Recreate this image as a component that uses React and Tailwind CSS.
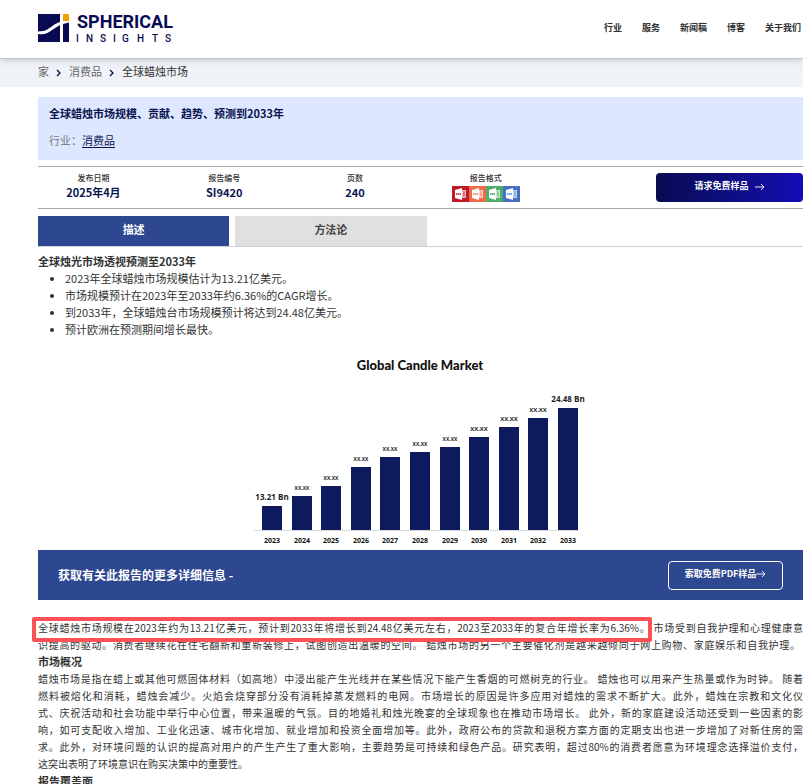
import React, { useState } from "react";

const navLinks = ["行业", "服务", "新闻稿", "博客", "关于我们"];

const facts = [
  { label: "发布日期", value: "2025年4月" },
  { label: "报告编号", value: "SI9420" },
  { label: "页数", value: "240" },
];

const highlights = [
  "2023年全球蜡烛市场规模估计为13.21亿美元。",
  "市场规模预计在2023年至2033年约6.36%的CAGR增长。",
  "到2033年，全球蜡烛台市场规模预计将达到24.48亿美元。",
  "预计欧洲在预测期间增长最快。",
];

// size is the font size of the label above the bar
const bars = [
  { year: 2023, height: 24, label: "13.21 Bn", size: 8 },
  { year: 2024, height: 34, label: "XX.XX", size: 5 },
  { year: 2025, height: 44, label: "XX.XX", size: 5 },
  { year: 2026, height: 63, label: "XX.XX", size: 5 },
  { year: 2027, height: 73, label: "XX.XX", size: 5 },
  { year: 2028, height: 78, label: "XX.XX", size: 5 },
  { year: 2029, height: 83, label: "XX.XX", size: 5 },
  { year: 2030, height: 93, label: "XX.XX", size: 6 },
  { year: 2031, height: 103, label: "XX.XX", size: 6 },
  { year: 2032, height: 112, label: "XX.XX", size: 6 },
  { year: 2033, height: 122, label: "24.48 Bn", size: 8 },
];

const overview = [
  "蜡烛市场是指在蜡上或其他可燃固体材料（如高地）中浸出能产生光线并在某些情况下能产生香烟的可燃树克的行业。 蜡烛也可以用来产生热量或作为时钟。 随着",
  "燃料被熔化和消耗，蜡烛会减少。火焰会烧穿部分没有消耗掉蒸发燃料的电网。市场增长的原因是许多应用对蜡烛的需求不断扩大。此外，蜡烛在宗教和文化仪",
  "式、庆祝活动和社会功能中举行中心位置，带来温暖的气氛。目的地婚礼和烛光晚宴的全球现象也在推动市场增长。 此外，新的家庭建设活动还受到一些因素的影",
  "响，如可支配收入增加、工业化迅速、城市化增加、就业增加和投资全面增加等。此外，政府公布的贷款和退税方案方面的定期支出也进一步增加了对新住房的需",
  "求。此外，对环境问题的认识的提高对用户的产生产生了重大影响，主要趋势是可持续和绿色产品。研究表明，超过80%的消费者愿意为环境理念选择溢价支付，",
];

function Logo() {
  return (
    <a href="#" aria-label="Spherical Insights">
      <svg width="142" height="34" viewBox="0 0 142 34" className="block font-['Roboto',sans-serif]">
        <path d="M0 2H22V10C15 12 11 18 5 19L0 19.500Z" fill="#080b52" />
        <path d="M0 22C7 23 10 21 14 18L22 13V30H0Z" fill="#080b52" />
        <path d="M25 12L31 10.500V30H25Z" fill="#080b52" />
        <rect x="25" y="2" width="6" height="7" fill="#eea303" />
        <text x="39" y="16" fill="#080b52" className="font-bold text-[18px]">
          SPHERICAL
        </text>
        <text
          x="38 48 62 75 84 99 114 127"
          y="30"
          fill="#080b52"
          className="font-medium text-[10px]"
        >
          INSIGHTS
        </text>
      </svg>
    </a>
  );
}

function Chevron() {
  return (
    <svg width="6" height="8" viewBox="0 0 6 8" className="mt-1">
      <path d="M1 1L4 4L1 7" fill="none" stroke="#080b52" strokeWidth="1.3" />
    </svg>
  );
}

function Arrow({ className }) {
  return (
    <svg width="10" height="8" viewBox="0 0 10 8" className={className}>
      <path d="M0 4H9M6 1L9 4L6 7" fill="none" stroke="white" strokeWidth="0.9" />
    </svg>
  );
}

function FormatIcon({ name, back, ink }) {
  return (
    <svg width="17" height="16" viewBox="0 0 17 16" role="img" aria-label={name}>
      <rect width="17" height="16" fill={back} />
      <path d="M9 4H14V12H9Z" fill="white" fillOpacity="0.7" />
      <path d="M11 6H13M11 8H13M11 10H13" stroke={ink} strokeWidth="0.8" />
      <path d="M3 4L10 2V14L3 12Z" fill="white" />
      <path d="M4 8H9" stroke={ink} strokeWidth="1.500" strokeDasharray="1.500 0.400" />
    </svg>
  );
}

function CandleChart() {
  return (
    <svg width="374" height="200" viewBox="0 0 374 200" className="font-['Open_Sans',sans-serif] font-bold">
      <text x="186" y="20" textAnchor="middle" fill="#111" className="font-['Lato',sans-serif] text-[13px] font-black">
        Global Candle Market
      </text>
      <path d="M20 180.500H345" stroke="#d9d9d9" />
      {bars.map((bar, i) => {
        const center = 38 + Math.round(i * 29.6);
        return (
          <g key={bar.year}>
            <rect x={center - 10} y={180 - bar.height} width="20" height={bar.height} fill="#0d1b5e" />
            <text
              x={center}
              y={174 - bar.height}
              textAnchor="middle"
              fill="#222"
              style={{ fontSize: bar.size }}
            >
              {bar.label}
            </text>
            <text x={center} y="193" textAnchor="middle" fill="#111" className="text-[7px]">
              {bar.year}
            </text>
          </g>
        );
      })}
    </svg>
  );
}

function App() {
  const [tab, setTab] = useState("描述");

  return (
    <div className="h-screen overflow-hidden bg-white font-['Noto_Sans_CJK_SC',sans-serif] text-[11px] leading-[17px] text-[#333]">
      <header className="relative flex h-[59px] items-center justify-between border-b border-[#c4c5c9] bg-white pb-1 pl-[38px] pr-[2px] shadow-md">
        <div className="pt-1">
          <Logo />
        </div>
        <nav className="flex gap-5 text-[9px] font-bold">
          {navLinks.map((link) => (
            <a key={link} href="#" className="whitespace-nowrap">
              {link}
            </a>
          ))}
        </nav>
      </header>

      <div className="flex h-7 items-center gap-[7px] bg-[#eff3f8] pb-1 pl-[38px]">
        <a href="#" className="text-[#666]">家</a>
        <Chevron />
        <a href="#" className="text-[#666]">消费品</a>
        <Chevron />
        <span>全球蜡烛市场</span>
      </div>

      <main className="pl-[38px]">
        <section className="mt-[10px] h-[63px] bg-[#dde7ff] px-[11px] pt-2">
          <h1 className="font-bold text-[#0a1550]">全球蜡烛市场规模、贡献、趋势、预测到2033年</h1>
          <p className="mt-[10px] text-[#777]">
            行业：
            <a href="#" className="text-[#0a1550] underline underline-offset-2">消费品</a>
          </p>
        </section>

        <section className="mt-[6px] flex h-[43px] items-center border-y border-[#a8a8a8] text-center">
          {facts.map((fact) => (
            <div key={fact.label} className="w-[17.1%] pb-[2px] first:-ml-[10px]">
              <p className="text-[8px] leading-3 font-medium">{fact.label}</p>
              <p className="text-[11px] font-bold text-[#0a1550]">{fact.value}</p>
            </div>
          ))}
          <div className="w-[17.1%] pb-[2px]">
            <p className="text-[8px] leading-3 font-medium">报告格式</p>
            <div className="mt-[2px] flex justify-center">
              <FormatIcon name="PDF" back="#c01a27" ink="#c01a27" />
              <FormatIcon name="PPT" back="#ef6c4a" ink="#ef6c4a" />
              <FormatIcon name="Excel" back="#52ac6c" ink="#3aa05a" />
              <FormatIcon name="Word" back="#486fc0" ink="#3f86e8" />
            </div>
          </div>
          <button
            type="button"
            className="ml-auto flex h-[29px] w-[147px] items-center justify-center gap-[6px] rounded bg-linear-to-r from-[#080b52] to-[#150bb5] pb-1 text-[9px] font-bold text-white"
          >
            请求免费样品
            <Arrow className="mt-[3px]" />
          </button>
        </section>

        <div className="mt-[7px] flex gap-[6px] border-b border-[#d0d0da]">
          {["描述", "方法论"].map((name) => (
            <button
              key={name}
              type="button"
              onClick={() => setTab(name)}
              className={`h-[30px] w-1/4 pb-1 font-bold ${
                tab === name ? "bg-[#2d4790] text-white" : "bg-[#e0e0e0] text-[#444]"
              }`}
            >
              {name}
            </button>
          ))}
        </div>

        <h2 className="mt-[6px] font-bold">全球烛光市场透视预测至2033年</h2>
        <ul className="list-disc pl-[27px]">
          {highlights.map((item) => (
            <li key={item}>{item}</li>
          ))}
        </ul>

        <div className="mt-3 flex justify-center">
          <CandleChart />
        </div>

        <section className="flex h-[50px] items-center justify-between bg-[#2d4790] pl-5 pr-5 text-white">
          <p className="pb-[2px] text-[12px] font-bold">获取有关此报告的更多详细信息 -</p>
          <button
            type="button"
            className="flex h-[29px] w-[115px] items-center justify-center rounded border border-white pb-1 text-[9px] font-bold"
          >
            索取免费PDF样品
            <Arrow className="mt-[2px]" />
          </button>
        </section>

        <section className="mt-[19px] text-[10px]">
          <p className="relative [text-align-last:justify]">
            <span className="block whitespace-nowrap">
              全球蜡烛市场规模在2023年约为13.21亿美元，预计到2033年将增长到24.48亿美元左右，2023至2033年的复合年增长率为6.36%。 市场受到自我护理和心理健康意
            </span>
            <span className="block whitespace-nowrap pr-[3px]">
              识提高的驱动。消费者继续花在住宅翻新和重新装修上，试图创造出温暖的空间。 蜡烛市场的另一个主要催化剂是越来越倾向于网上购物、家庭娱乐和自我护理。
            </span>
            {/* highlight around the first sentence */}
            <span className="absolute -left-[6px] -top-[2px] h-[25px] w-[81%] rounded-xs border-4 border-[#fb5055]" />
          </p>
          <h3 className="text-[11px] font-bold">市场概况</h3>
          <p className="pb-px">
            {overview.map((line) => (
              <span key={line} className="block whitespace-nowrap [text-align-last:justify]">
                {line}
              </span>
            ))}
            <span className="block">这突出表明了环境意识在购买决策中的重要性。</span>
          </p>
          <h3 className="text-[11px] font-bold">报告覆盖面</h3>
        </section>
      </main>
    </div>
  );
}

export default App;
